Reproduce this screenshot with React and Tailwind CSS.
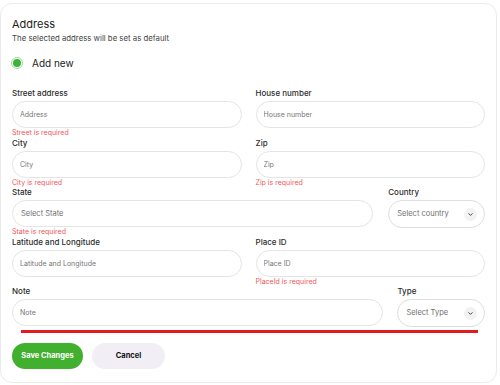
import { ChevronDown } from 'lucide-react'

const labelCls = 'block text-[8px] leading-[10px] font-medium text-[#2d2d2d] mb-[3px]'
const boxCls =
  'block w-full h-[27px] rounded-full border border-[#e4e4e4] bg-white px-[7px] text-[7px] text-[#333] placeholder:text-[#767676] outline-none'

function Field({ label, placeholder, error, className = '' }) {
  return (
    <div className={className}>
      <label className={labelCls}>{label}</label>
      <input className={boxCls} placeholder={placeholder} />
      <div className="h-[9.5px] text-[7px] leading-[9px] text-[#f2555a]">{error}</div>
    </div>
  )
}

function SelectField({ label, placeholder, className = '' }) {
  return (
    <div className={className}>
      <label className={labelCls}>{label}</label>
      <div className="mt-[1px] flex h-[28px] w-full items-center justify-between rounded-full border border-[#dedede] bg-white pl-[8px] pr-[7px]">
        <span className="text-[7.5px] text-[#6f6f6f]">{placeholder}</span>
        <span className="flex h-[13px] w-[13px] items-center justify-center rounded-full bg-[#f2f2f2]">
          <ChevronDown className="h-[7px] w-[7px] text-[#333]" strokeWidth={3} />
        </span>
      </div>
    </div>
  )
}

function StaticField({ label, placeholder, error, className = '' }) {
  return (
    <div className={className}>
      <label className={labelCls}>{label}</label>
      <div className="flex h-[27px] w-full items-center rounded-full border border-[#e4e4e4] bg-white px-[8px]">
        <span className="text-[7.5px] text-[#6f6f6f]">{placeholder}</span>
      </div>
      <div className="h-[9.5px] text-[7px] leading-[9px] text-[#f2555a]">{error}</div>
    </div>
  )
}

export default function App() {
  return (
    <div className="bg-white pt-[3px]" style={{ fontFamily: 'Inter, "Noto Sans", sans-serif' }}>
      <div className="w-[497px] h-[380px] rounded-[12px] border border-[#ebebeb] bg-white px-[11px] pt-[13px]">
        <h2 className="text-[11px] leading-[14px] text-[#222]">Address</h2>
        <p className="mt-[2px] text-[7.8px] leading-[10px] text-[#444]">
          The selected address will be set as default
        </p>

        <div className="mt-[13px] flex h-[14px] items-center gap-[9px]">
          <span className="-ml-[1px] flex h-[12px] w-[12px] items-center justify-center rounded-full border border-[#9fd99b]">
            <span className="h-[8px] w-[8px] rounded-full bg-[#3db33a]" />
          </span>
          <span className="text-[10px] text-[#222]">Add new</span>
        </div>

        <div className="mt-[18px] flex flex-col">
          <div className="flex gap-[14px]">
            <Field className="w-[230px]" label="Street address" placeholder="Address" error="Street is required" />
            <Field className="w-[230px]" label="House number" placeholder="House number" />
          </div>
          <div className="flex gap-[14px]">
            <Field className="w-[230px]" label="City" placeholder="City" error="City is required" />
            <Field className="w-[230px]" label="Zip" placeholder="Zip" error="Zip is required" />
          </div>
          <div className="flex gap-[15px]">
            <StaticField className="w-[362px]" label="State" placeholder="Select State" error="State is required" />
            <SelectField className="w-[97px]" label="Country" placeholder="Select country" />
          </div>
          <div className="flex gap-[14px]">
            <Field className="w-[230px]" label="Latitude and Longitude" placeholder="Latitude and Longitude" />
            <Field className="w-[230px]" label="Place ID" placeholder="Place ID" error="PlaceId is required" />
          </div>
          <div className="flex gap-[14px]">
            <div className="w-[373px]">
              <label className={labelCls}>Note</label>
              <input className={boxCls} placeholder="Note" />
            </div>
            <SelectField className="w-[88px]" label="Type" placeholder="Select Type" />
          </div>
        </div>

        <div className="ml-[9px] mt-[3px] h-[3px] w-[457px] bg-[#e31b1b]" />

        <div className="mt-[10px] flex gap-[9px]">
          <button className="h-[26px] w-[71px] rounded-full bg-[#41b02e] text-[7.5px] font-bold text-white">
            Save Changes
          </button>
          <button className="h-[26px] w-[73px] rounded-full bg-[#f1eff5] text-[7.5px] font-bold text-[#111]">
            Cancel
          </button>
        </div>
      </div>
    </div>
  )
}
